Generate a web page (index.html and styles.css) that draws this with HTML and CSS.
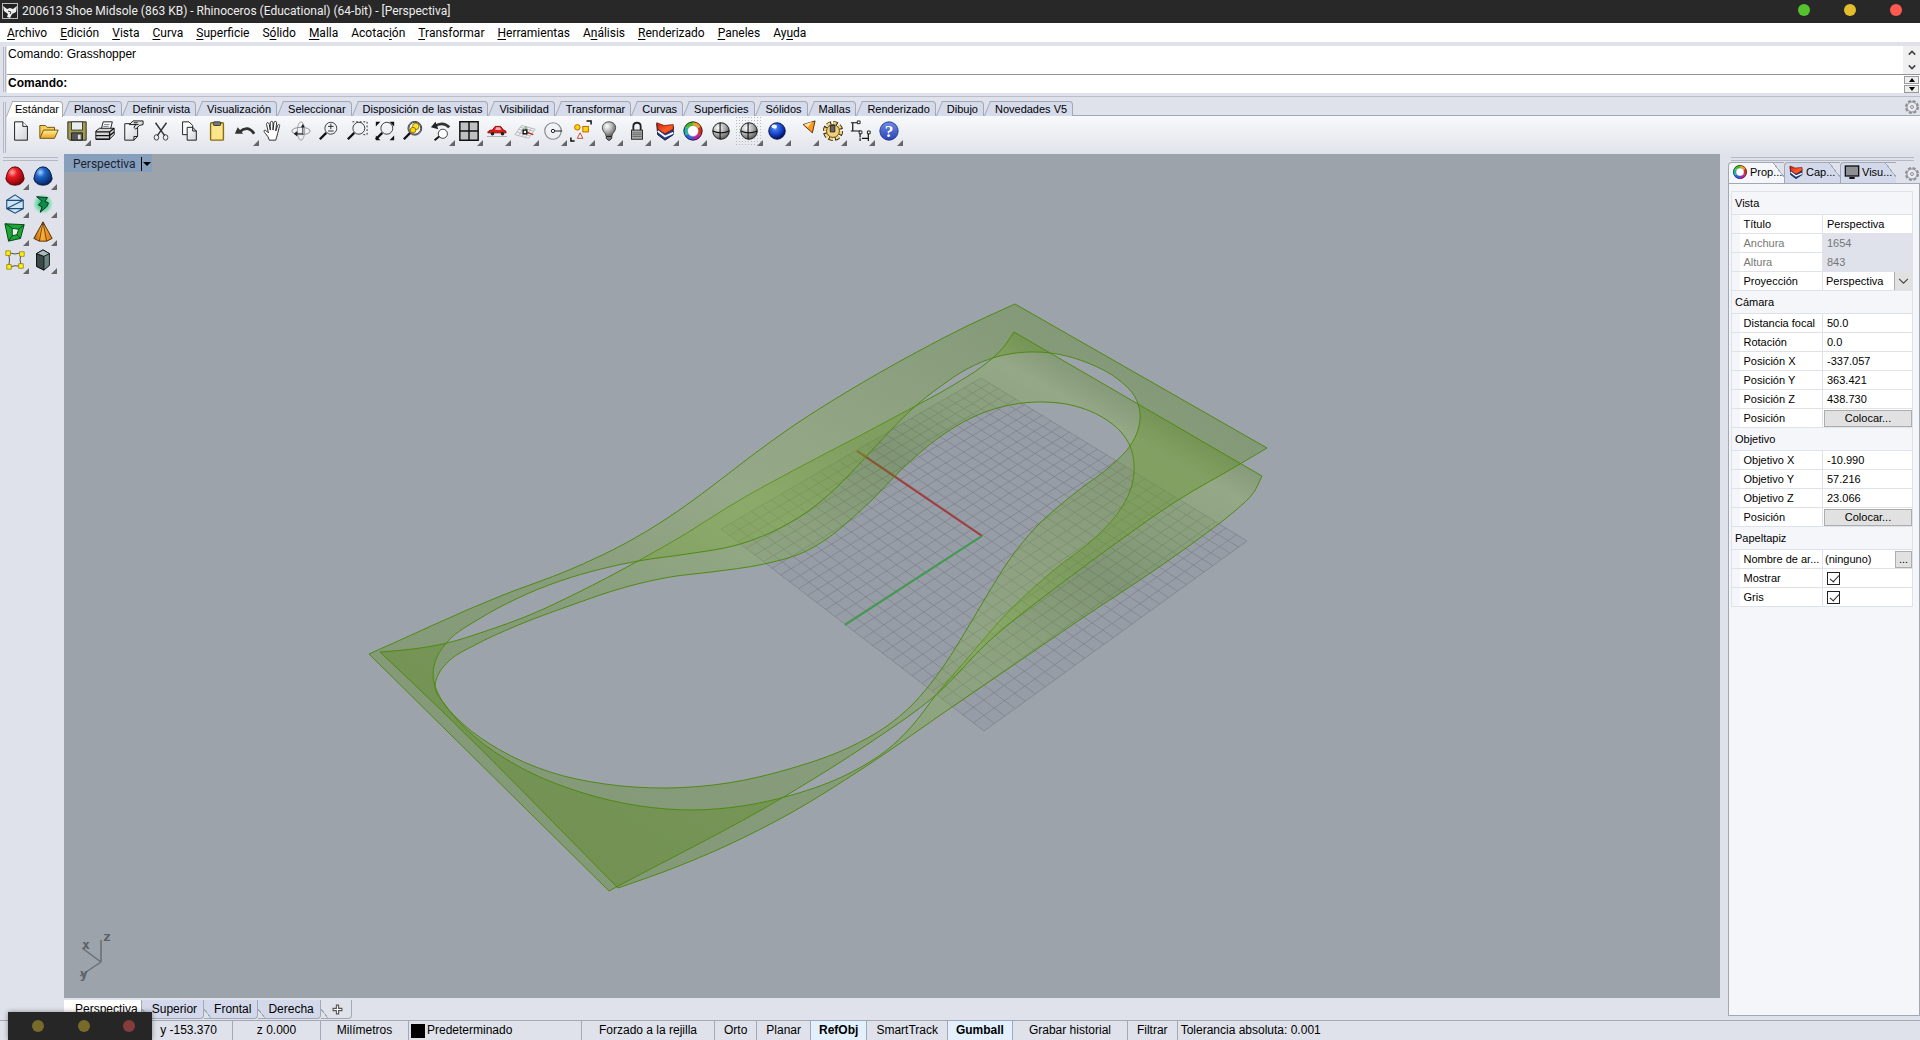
FILE: index.html
```html
<!DOCTYPE html>
<html lang="es">
<head>
<meta charset="utf-8">
<title>200613 Shoe Midsole (863 KB) - Rhinoceros (Educational) (64-bit) - [Perspectiva]</title>
<link rel="stylesheet" href="styles.css">
</head>
<body>
<svg class="defs" aria-hidden="true">
  <defs>
    <linearGradient id="gPage" x1="0" y1="0" x2="1" y2="1"><stop offset="0" stop-color="#fff"/><stop offset="1" stop-color="#cfd2d8"/></linearGradient>
    <linearGradient id="gFolder" x1="0" y1="0" x2="0" y2="1"><stop offset="0" stop-color="#fff0a0"/><stop offset="1" stop-color="#e8a21c"/></linearGradient>
    <radialGradient id="gRed" cx=".35" cy=".3" r=".75"><stop offset="0" stop-color="#ffb0a8"/><stop offset=".35" stop-color="#ee1c25"/><stop offset="1" stop-color="#7d0008"/></radialGradient>
    <radialGradient id="gBlue" cx=".35" cy=".3" r=".75"><stop offset="0" stop-color="#a8d0ff"/><stop offset=".35" stop-color="#1c66c8"/><stop offset="1" stop-color="#06205c"/></radialGradient>
    <radialGradient id="gBall" cx=".38" cy=".3" r=".7"><stop offset="0" stop-color="#e8f2ff"/><stop offset=".2" stop-color="#3a78f0"/><stop offset=".75" stop-color="#0c2fae"/><stop offset="1" stop-color="#03103f"/></radialGradient>
    <radialGradient id="gGray" cx=".35" cy=".3" r=".75"><stop offset="0" stop-color="#fff"/><stop offset=".5" stop-color="#b4b4b4"/><stop offset="1" stop-color="#555"/></radialGradient>
    <radialGradient id="gGlow"><stop offset=".3" stop-color="#28d27a"/><stop offset="1" stop-color="#28d27a" stop-opacity="0"/></radialGradient>
    <linearGradient id="gHelp" x1="0" y1="0" x2="0" y2="1"><stop offset="0" stop-color="#6f8be6"/><stop offset="1" stop-color="#2a43b4"/></linearGradient>
    <linearGradient id="gCone" x1="0" y1="0" x2="1" y2="0"><stop offset="0" stop-color="#b8600a"/><stop offset=".45" stop-color="#ffb03a"/><stop offset="1" stop-color="#d67a10"/></linearGradient>
    <linearGradient id="gLayer" x1="0" y1="0" x2="1" y2="1"><stop offset="0" stop-color="#c81c08"/><stop offset=".6" stop-color="#ff5a26"/><stop offset="1" stop-color="#e83010"/></linearGradient>
    <symbol id="layers" viewBox="0 0 24 24"><path d="M3 4l8 6 10-3v9l-9 6-8-6z" fill="#1d3f98" stroke="#111"/><path d="M4 12l8 6 9-4" fill="none" stroke="#fff" stroke-width="2"/><path d="M3 3l8 3 10-1v5l-9 5-8-5z" fill="url(#gLayer)" stroke="#6a1406" stroke-width=".8"/></symbol>
    <symbol id="ring" viewBox="0 0 24 24"><g fill="none" stroke-width="5"><path d="M12 4.500A7.500 7.500 0 0 1 18.500 8.200" stroke="#f0a020"/><path d="M18.500 8.200A7.500 7.500 0 0 1 18.500 15.800" stroke="#e02818"/><path d="M18.500 15.800A7.500 7.500 0 0 1 12 19.500" stroke="#c018b0"/><path d="M12 19.500A7.500 7.500 0 0 1 5.500 15.800" stroke="#2860e8"/><path d="M5.500 15.800A7.500 7.500 0 0 1 5.500 8.200" stroke="#18b8b0"/><path d="M5.500 8.200A7.500 7.500 0 0 1 12 4.500" stroke="#40c020"/></g><circle cx="12" cy="12" r="10" fill="none" stroke="#222"/><circle cx="12" cy="12" r="6" fill="#fff" stroke="#777" stroke-width=".6"/></symbol>
    <symbol id="sphere" viewBox="0 0 24 24"><circle cx="12" cy="12" r="9" fill="url(#gGray)" stroke="#111"/><path d="M11 3v18M3 12q9 4 18 0" fill="none" stroke="#111" stroke-width="1.200"/></symbol>
    <symbol id="lens" viewBox="0 0 24 24"><path d="M9 14l-7 7" stroke="#111" stroke-width="2.500"/><circle cx="14" cy="9" r="6.500" fill="#f1f2f5" fill-opacity=".6" stroke="#333"/></symbol>
    <symbol id="gear" viewBox="0 0 16 16"><circle cx="8" cy="8" r="6" fill="none" stroke="#8d8f94" stroke-width="2" stroke-dasharray="3 1.700"/><circle cx="8" cy="8" r="5" fill="#e9ebf0" stroke="#8d8f94"/><circle cx="8" cy="8" r="1.500" fill="none" stroke="#8d8f94"/></symbol>
  </defs>
</svg>

<header class="titlebar">
  <svg class="app-icon" viewBox="0 0 16 16"><rect width="16" height="16" fill="#bbb"/><rect x="1" y="1" width="14" height="14" fill="#222"/><path d="M1 3l4 3 3-1 3 1 4-3-1 6-4 2-2 4-3-1 1-3-4-3z" fill="#eee"/><path d="M6 8l3 1-1 2" stroke="#333" fill="none"/></svg>
  <h1>200613 Shoe Midsole (863 KB) - Rhinoceros (Educational) (64-bit) - [Perspectiva]</h1>
  <div class="window-buttons">
    <button class="dot green" aria-label="Minimizar"></button>
    <button class="dot yellow" aria-label="Maximizar"></button>
    <button class="dot red" aria-label="Cerrar"></button>
  </div>
</header>

<nav class="menubar">
  <button><u>A</u>rchivo</button><button><u>E</u>dición</button><button><u>V</u>ista</button><button><u>C</u>urva</button><button><u>S</u>uperficie</button><button>S<u>ó</u>lido</button><button><u>M</u>alla</button><button>Acotac<u>i</u>ón</button><button><u>T</u>ransformar</button><button><u>H</u>erramientas</button><button>A<u>n</u>álisis</button><button><u>R</u>enderizado</button><button><u>P</u>aneles</button><button>Ay<u>u</u>da</button>
</nav>

<section class="command">
  <div class="grip"></div>
  <div class="command-box">
    <div class="history">
      <p>Comando: Grasshopper</p>
      <div class="scroll"><button aria-label="Subir"><svg viewBox="0 0 10 6"><path d="M1 5l4-4 4 4"/></svg></button><button aria-label="Bajar"><svg viewBox="0 0 10 6"><path d="M1 1l4 4 4-4"/></svg></button></div>
    </div>
    <div class="prompt">
      <label for="cmd">Comando:</label><input id="cmd" type="text">
      <div class="spin"><button aria-label="Anterior"><svg viewBox="0 0 6 4"><path d="M0 4l3-4 3 4z"/></svg></button><button aria-label="Siguiente"><svg viewBox="0 0 6 4"><path d="M0 0l3 4 3-4z"/></svg></button></div>
    </div>
  </div>
</section>

<section class="toolband">
  <div class="grip"></div>
  <div class="toolband-main">
    <div class="tabs">
      <button class="active">Estándar</button><button>PlanosC</button><button>Definir vista</button><button>Visualización</button><button>Seleccionar</button><button>Disposición de las vistas</button><button>Visibilidad</button><button>Transformar</button><button>Curvas</button><button>Superficies</button><button>Sólidos</button><button>Mallas</button><button>Renderizado</button><button>Dibujo</button><button>Novedades V5</button>
      <svg class="gear" viewBox="0 0 16 16"><use href="#gear"/></svg>
    </div>
    <div class="tools">
      <button aria-label="Nuevo"><svg viewBox="0 0 24 24"><path d="M5 2h9l5 5v15H5z" fill="url(#gPage)" stroke="#111"/><path d="M14 2v5h5" fill="#fff" stroke="#111"/></svg></button>
      <button aria-label="Abrir"><svg viewBox="0 0 24 24"><path d="M2 19V6h6l2 2h8v3" fill="#f7cf52" stroke="#6a4a08"/><path d="M2 20l4-9h16l-4 9z" fill="url(#gFolder)" stroke="#6a4a08"/></svg></button>
      <button class="more" aria-label="Guardar"><svg viewBox="0 0 24 24"><path d="M2 2h20v20H4l-2-2z" fill="#a39c4e" stroke="#222"/><path d="M6 2h12v9H6z" fill="#e9edf0" stroke="#333"/><path d="M6 14h12v8H6z" fill="#555" stroke="#222"/><path d="M13 16h3v5h-3z" fill="#ddd"/></svg></button>
      <button aria-label="Imprimir"><svg viewBox="0 0 24 24"><path d="M8 10l2-8h10l-2 8z" fill="#fff" stroke="#111"/><path d="M11 5h6M10 7h6" stroke="#777"/><path d="M2 12l4-3h16v7l-5 5H2z" fill="#d6d6d6" stroke="#111"/><path d="M2 13h15l5-4M2 17h15l5-4M17 13v8M2 21h15" fill="none" stroke="#111" stroke-width="1.500"/></svg></button>
      <button aria-label="Propiedades"><svg viewBox="0 0 24 24"><path d="M3 4h14v14l-4 4H3z" fill="url(#gPage)" stroke="#111"/><path d="M13 22v-4h4" fill="none" stroke="#111"/><path d="M8 5l4-4h11v4l-4 1-4 4-2-2 2-3z" fill="#ddd" stroke="#111"/><path d="M13 3h4M14 5h4" stroke="#111"/></svg></button>
      <button aria-label="Cortar"><svg viewBox="0 0 24 24"><path d="M6 3l10 14M18 3L8 17" stroke="#333" stroke-width="1.600"/><ellipse cx="7" cy="19" rx="2.500" ry="3" fill="none" stroke="#333"/><ellipse cx="17" cy="19" rx="2.500" ry="3" fill="none" stroke="#333"/></svg></button>
      <button aria-label="Copiar"><svg viewBox="0 0 24 24"><path d="M5 2h7l4 4v10H5z" fill="#fff" stroke="#111"/><path d="M10 8h6l4 4v10H10z" fill="url(#gPage)" stroke="#111"/><path d="M16 8v4h4" fill="none" stroke="#111"/></svg></button>
      <button aria-label="Pegar"><svg viewBox="0 0 24 24"><rect x="5" y="3" width="14" height="19" rx="1" fill="#fbe68a" stroke="#8a6a12" stroke-width="1.500"/><rect x="8" y="2" width="8" height="4" rx="1" fill="#777" stroke="#333"/></svg></button>
      <button class="more" aria-label="Deshacer"><svg viewBox="0 0 24 24"><path d="M6 13Q15 5 22 15" fill="none" stroke="#333" stroke-width="3"/><path d="M1 15l3-7 6 7z" fill="#333"/></svg></button>
      <button aria-label="Encuadre"><svg viewBox="0 0 24 24"><path d="M8 22q-1-4-4-7c-3-3-2-5 1-3l2 2-2-9c0-3 2-3 3 0l1 6V3c0-2 3-2 3 0v8l1-8c0-2 3-2 3 0l-1 9 2-6c1-2 3-1 2 1l-2 8q-1 4-2 7z" fill="#fff" stroke="#222"/></svg></button>
      <button aria-label="Rotar vista"><svg viewBox="0 0 24 24"><ellipse cx="12" cy="12" rx="10" ry="4" fill="none" stroke="#888"/><ellipse cx="12" cy="12" rx="4" ry="10" fill="none" stroke="#999"/><path d="M14 6v10M6 15h8" stroke="#222"/><path d="M12 8l2-4 2 4zM8 12v6l-4-3z" fill="#222"/></svg></button>
      <button aria-label="Zoom dinámico"><svg viewBox="0 0 24 24"><use href="#lens"/><path d="M11 7h6M14 4v6M11 12h6" stroke="#222"/></svg></button>
      <button aria-label="Zoom ventana"><svg viewBox="0 0 24 24"><use href="#lens"/><path d="M7 2h16v14h-5" fill="none" stroke="#222" stroke-dasharray="2 2"/></svg></button>
      <button aria-label="Zoom extensión"><svg viewBox="0 0 24 24"><use href="#lens"/><path d="M2 2h5L2 7zM22 2v5l-5-5zM22 22h-5l5-5zM2 22v-5l5 5z" fill="#111"/></svg></button>
      <button aria-label="Zoom seleccionado"><svg viewBox="0 0 24 24"><use href="#lens"/><circle cx="15" cy="7" r="3.500" fill="#ffe22e" stroke="#8a7400"/><circle cx="12" cy="11" r="3" fill="#ffd800" stroke="#8a7400"/><circle cx="14" cy="9" r="7.500" fill="none" stroke="#333"/></svg></button>
      <button class="more" aria-label="Vista anterior"><svg viewBox="0 0 24 24"><path d="M5 7Q14 1 21 8" fill="none" stroke="#333" stroke-width="3"/><path d="M1 8l5-6 3 8z" fill="#222"/><circle cx="14" cy="15" r="5" fill="#fff" stroke="#333"/><path d="M10 18l-5 4" stroke="#111" stroke-width="2"/></svg></button>
      <button class="more" aria-label="Cuatro vistas"><svg viewBox="0 0 24 24"><path d="M2 2h20v20H2z" fill="#bfc0c2" stroke="#111" stroke-width="1.600"/><path d="M12 2v20M2 12h20" stroke="#111" stroke-width="1.600"/></svg></button>
      <button class="more" aria-label="Vista derecha"><svg viewBox="0 0 24 24"><path d="M2 14q0-3 5-3l3-4h6l3 4q3 0 3 3z" fill="#e01818" stroke="#8a0808"/><path d="M11 8h4l2 3h-7z" fill="#f6b0b0"/><circle cx="7" cy="15" r="2" fill="#222"/><circle cx="18" cy="15" r="2" fill="#222"/><path d="M1 18h22" stroke="#aaa"/></svg></button>
      <button class="more" aria-label="Plano de construcción"><svg viewBox="0 0 24 24"><path d="M8 6l15 4-7 10L1 16zM12 7l-7 10M15 8L9 18M19 9l-7 10M5 10l14 5M3 13l14 4M7 8l14 4" fill="none" stroke="#aaa" stroke-width=".8"/><path d="M13 13l8 3" stroke="#c22" stroke-width="1.600"/><path d="M13 13V7" stroke="#2a2"/><rect x="10" y="11" width="4" height="4" fill="#fff" stroke="#111" stroke-width="1.500"/></svg></button>
      <button class="more" aria-label="Referencia a objetos"><svg viewBox="0 0 24 24"><circle cx="12" cy="12" r="9" fill="none" stroke="#888" stroke-width="1.300"/><circle cx="12" cy="12" r="1.800" fill="#fff" stroke="#111"/><path d="M14 12h8" stroke="#111"/></svg></button>
      <button class="more" aria-label="Seleccionar"><svg viewBox="0 0 24 24"><path d="M18 1h5v4M1 19v4h4" fill="none" stroke="#111" stroke-width="1.600"/><circle cx="8" cy="8" r="3" fill="#ffd800" stroke="#c05a00"/><rect x="14" y="7" width="6" height="6" fill="#ffd800" stroke="#c05a00"/><path d="M11 14l3 6H8z" fill="#fff" stroke="#c23a1a"/></svg></button>
      <button class="more" aria-label="Ocultar"><svg viewBox="0 0 24 24"><path d="M8 15c-6-6-3-13 4-13s10 7 4 13l-1 3H9z" fill="url(#gGray)" stroke="#444"/><path d="M9 18h6v2l-2 2h-2l-2-2z" fill="#777" stroke="#222"/></svg></button>
      <button class="more" aria-label="Bloquear"><svg viewBox="0 0 24 24"><path d="M8 11V7q0-4 4-4t4 4v4" fill="none" stroke="#222" stroke-width="2"/><rect x="6" y="11" width="12" height="10" fill="#aaa" stroke="#222"/><path d="M7 14h10M7 16h10M7 18h10" stroke="#666"/></svg></button>
      <button class="more" aria-label="Capas"><svg viewBox="0 0 24 24"><use href="#layers"/></svg></button>
      <button class="more" aria-label="Propiedades de objeto"><svg viewBox="0 0 24 24"><use href="#ring"/></svg></button>
      <button aria-label="Sombreado"><svg viewBox="0 0 24 24"><use href="#sphere"/></svg></button>
      <button class="more pressed" aria-label="Modo sombreado"><svg viewBox="0 0 24 24"><use href="#sphere"/></svg></button>
      <button class="more" aria-label="Renderizar"><svg viewBox="0 0 24 24"><circle cx="12" cy="12" r="9" fill="url(#gBall)" stroke="#041040"/><ellipse cx="9" cy="7" rx="3" ry="2" fill="#fff" opacity=".9"/></svg></button>
      <button class="more" aria-label="Luz"><svg viewBox="0 0 24 24"><path d="M10 5l13-4-3 13z" fill="#ff9a1c" stroke="#4a2a08"/><path d="M11 5l9-3-5 6z" fill="#ffe3a8"/></svg></button>
      <button class="more" aria-label="Opciones"><svg viewBox="0 0 24 24"><circle cx="12" cy="12" r="8.500" fill="none" stroke="#3a2a08" stroke-width="5" stroke-dasharray="4.600 2.075"/><circle cx="12" cy="12" r="8" fill="none" stroke="#f6d47a" stroke-width="4" stroke-dasharray="3.300 2.980"/><circle cx="12" cy="12" r="7" fill="#f3d07a" stroke="#5a4212"/><path d="M9 6h5v7H9z" fill="#666" stroke="#222"/></svg></button>
      <button class="more" aria-label="Acotar"><svg viewBox="0 0 24 24"><path d="M3 3v9M1 3h8M1 12h10v7M11 20v3M20 13v10M13 20h7" fill="none" stroke="#111" stroke-width="1.300"/><path d="M8 1h3v3H8zM10 12h3v3h-3zM19 12h3v3h-3z" fill="#fff" stroke="#111"/></svg></button>
      <button class="more" aria-label="Ayuda"><svg viewBox="0 0 24 24"><circle cx="12" cy="12" r="10" fill="url(#gHelp)" stroke="#24378e"/><text x="12" y="19" class="help-mark">?</text></svg></button>
    </div>
  </div>
</section>

<main class="work">
  <aside class="dock">
    <div class="dock-grip"></div>
    <div class="dock-tools">
      <button class="more" aria-label="Esfera roja"><svg viewBox="0 0 24 24"><path d="M2 15Q4 2 12 2t10 13q-2 7-10 7T2 15z" fill="url(#gRed)" stroke="#5a0006"/></svg></button>
      <button class="more" aria-label="Esfera azul"><svg viewBox="0 0 24 24"><path d="M2 15Q4 2 12 2t10 13q-2 7-10 7T2 15z" fill="url(#gBlue)" stroke="#04163e"/></svg></button>
      <button class="more" aria-label="Malla"><svg viewBox="0 0 24 24"><path d="M12 2l9 6v9l-9 5-9-5V8z" fill="#cfe4f5" stroke="#1d4d78" stroke-width="1.200"/><path d="M3 8h18M3 17h18M3 17L21 8" fill="none" stroke="#1d4d78" stroke-width="1.200"/></svg></button>
      <button class="more" aria-label="Explotar"><svg viewBox="0 0 24 24"><circle cx="12" cy="12" r="11" fill="url(#gGlow)"/><path d="M5 4l12 1-3 4 4 2-2 4-7 6 2-6-4-2 4-4z" fill="#118a4a" stroke="#062a18"/></svg></button>
      <button class="more" aria-label="Superficie"><svg viewBox="0 0 24 24"><path d="M1 3l21 1-4 15-13 3z" fill="#19a838" stroke="#063c12"/><path d="M9 8l7 1-2 6-5 1z" fill="#e8f4ea" stroke="#063c12"/><path d="M2 3l7 5M22 4l-6 5M18 19l-4-4M5 22l4-6" stroke="#063c12"/></svg></button>
      <button class="more" aria-label="Pirámide"><svg viewBox="0 0 24 24"><path d="M12 1l10 18-6 3H8l-6-3z" fill="url(#gCone)" stroke="#4a2804"/><path d="M12 1L8 22M12 1l4 21" stroke="#4a2804" stroke-width=".8"/></svg></button>
      <button class="more" aria-label="Puntos de control"><svg viewBox="0 0 24 24"><path d="M5 4q7 3 14 0-3 8 0 15-7-2-14 1 2-8 0-16z" fill="none" stroke="#444"/><path d="M2 2h5v5H2zM17 3h5v5h-5zM16 16h5v5h-5zM3 17h5v5H3z" fill="#ffee10" stroke="#8a7a00" stroke-width=".8"/></svg></button>
      <button class="more" aria-label="Sólido"><svg viewBox="0 0 24 24"><path d="M5 5l7-4 7 4v13l-6 5-8-4z" fill="#6b8080" stroke="#111"/><path d="M5 5l8 3v15l-8-4z" fill="#3a4a4a" stroke="#111"/><path d="M5 5l7-4 7 4-6 3z" fill="#a9bbbb" stroke="#111"/></svg></button>
    </div>
  </aside>

  <section class="center">
    <div class="viewport">
      <svg class="scene" viewBox="64 154 1656 844" preserveAspectRatio="xMidYMid meet">
        <defs>
          <linearGradient id="sheetTop" gradientUnits="userSpaceOnUse" x1="-224" y1="390" x2="119" y2="-208">
            <stop offset="0" stop-color="#4a8201"/><stop offset=".3" stop-color="#558c0c"/><stop offset=".56" stop-color="#82b435"/><stop offset=".7" stop-color="#78ac2c"/><stop offset="1" stop-color="#4a8201"/>
          </linearGradient>
          <linearGradient id="sheetLow" gradientUnits="userSpaceOnUse" x1="-224" y1="390" x2="119" y2="-208">
            <stop offset="0" stop-color="#4a8201"/><stop offset=".25" stop-color="#508806"/><stop offset=".5" stop-color="#78b028"/><stop offset=".58" stop-color="#70a81c"/><stop offset=".72" stop-color="#4a8201"/><stop offset=".82" stop-color="#66a01c"/><stop offset=".92" stop-color="#82b435"/><stop offset=".97" stop-color="#4a8201"/>
          </linearGradient>
        </defs>
        <path id="gridArea" class="grid-area"/>
        <path id="gridLines" class="grid-lines"/>
        <path class="axis-x" d="M982 536L857 451"/>
        <path class="axis-y" d="M982 536L845 625"/>
        <path id="low" class="sheet" fill="url(#sheetLow)"/>
        <path id="top" class="sheet" fill="url(#sheetTop)"/>
        <g class="gizmo"><path d="M101 962V940M101 962L82 948M101 962L80 976"/><text x="103" y="941">z</text><text x="82" y="949">x</text><text x="80" y="978">y</text></g>
      </svg>
      <button class="view-label"><span>Perspectiva</span><i></i></button>
    </div>
    <div class="view-tabs">
      <button class="active">Perspectiva</button><button>Superior</button><button>Frontal</button><button>Derecha</button><button class="add" aria-label="Nueva vista"><svg viewBox="0 0 10 10"><path d="M4 1h2v3h3v2H6v3H4V6H1V4h3z"/></svg></button>
    </div>
  </section>

  <aside class="panel">
    <div class="dock-grip"></div>
    <div class="panel-tabs">
      <button class="active"><svg viewBox="0 0 24 24"><use href="#ring"/></svg>Prop...</button>
      <button><svg viewBox="0 0 24 24"><use href="#layers"/></svg>Cap...</button>
      <button><svg viewBox="0 0 24 24"><rect x="2" y="3" width="20" height="15" fill="#8c9094" stroke="#111" stroke-width="2"/><path d="M8 21h8" stroke="#111" stroke-width="3"/></svg>Visu...</button>
      <svg class="gear" viewBox="0 0 16 16"><use href="#gear"/></svg>
    </div>
    <div class="panel-body">
      <table>
        <colgroup><col class="c-indent"><col class="c-name"><col></colgroup>
        <tbody>
        <tr class="head"><th colspan="3">Vista</th></tr>
        <tr><td></td><th>Título</th><td>Perspectiva</td></tr>
        <tr class="off"><td></td><th>Anchura</th><td>1654</td></tr>
        <tr class="off"><td></td><th>Altura</th><td>843</td></tr>
        <tr><td></td><th><label for="proj">Proyección</label></th><td class="ctl"><div class="pick"><select id="proj"><option>Perspectiva</option></select><svg viewBox="0 0 10 6"><path d="M1 1l4 4 4-4"/></svg></div></td></tr>
        <tr class="head"><th colspan="3">Cámara</th></tr>
        <tr><td></td><th>Distancia focal</th><td>50.0</td></tr>
        <tr><td></td><th>Rotación</th><td>0.0</td></tr>
        <tr><td></td><th>Posición X</th><td>-337.057</td></tr>
        <tr><td></td><th>Posición Y</th><td>363.421</td></tr>
        <tr><td></td><th>Posición Z</th><td>438.730</td></tr>
        <tr><td></td><th>Posición</th><td class="ctl"><button class="place">Colocar...</button></td></tr>
        <tr class="head"><th colspan="3">Objetivo</th></tr>
        <tr><td></td><th>Objetivo X</th><td>-10.990</td></tr>
        <tr><td></td><th>Objetivo Y</th><td>57.216</td></tr>
        <tr><td></td><th>Objetivo Z</th><td>23.066</td></tr>
        <tr><td></td><th>Posición</th><td class="ctl"><button class="place">Colocar...</button></td></tr>
        <tr class="head"><th colspan="3">Papeltapiz</th></tr>
        <tr><td></td><th>Nombre de ar...</th><td class="ctl"><div class="file"><span>(ninguno)</span><button>...</button></div></td></tr>
        <tr><td></td><th><label for="show">Mostrar</label></th><td class="check"><input id="show" type="checkbox" checked></td></tr>
        <tr><td></td><th><label for="grey">Gris</label></th><td class="check"><input id="grey" type="checkbox" checked></td></tr>
        </tbody>
      </table>
    </div>
  </aside>
</main>

<footer class="status">
  <span class="w-plane"></span><span class="w-coord"></span><span class="w-coord">y -153.370</span><span class="w-coord">z 0.000</span><span class="w-coord">Milímetros</span>
  <span class="layer"><i></i>Predeterminado</span>
  <button class="w-snap">Forzado a la rejilla</button><button>Orto</button><button>Planar</button><button class="on">RefObj</button><button>SmartTrack</button><button class="on">Gumball</button><button class="w-hist">Grabar historial</button><button>Filtrar</button>
  <span class="tol">Tolerancia absoluta: 0.001</span>
</footer>
<div class="floating"><i></i><i></i><i class="close"></i></div>
<script src="scene.js"></script>
</body>
</html>
```
FILE: styles.css
```css
* { box-sizing: border-box; }
body { margin: 0; height: 100vh; display: flex; flex-direction: column; overflow: hidden; background: #dfe2ea; color: #000; font: 11px/14px "Liberation Sans", Arial, sans-serif; }
button { border: 0; background: none; padding: 0; margin: 0; font: inherit; color: inherit; white-space: nowrap; }
p, h1 { margin: 0; }
svg { display: block; }
.defs { position: absolute; width: 0; height: 0; }

.titlebar { display: flex; align-items: center; gap: 4px; height: 23px; padding: 0 18px 1px 2px; background: #282828; color: #eee; flex: none; }
.titlebar h1 { font: 12px/16px Roboto, "Noto Sans", sans-serif; }
.app-icon { width: 16px; height: 16px; }
.window-buttons { margin-left: auto; padding-bottom: 2px; display: flex; gap: 34px; }
.dot { width: 12px; height: 12px; border-radius: 50%; }
.green { background: #55c22e; }
.yellow { background: #e3be2c; }
.red { background: #ff5a50; }

.menubar { display: flex; gap: 13px; height: 19px; padding: 1px 7px 0; background: #fff; font: 12px/18px Roboto, "Noto Sans", sans-serif; flex: none; }
.menubar u { text-underline-offset: 2px; }

.grip { width: 3px; margin: 1px 1px 1px 3px; border: 1px solid #b4b8c4; border-width: 0 1px; flex: none; }
.command { display: flex; margin-top: 4px; padding-bottom: 3px; border-bottom: 1px solid #b9bdc9; flex: none; }
.command-box { flex: 1; background: #fff; font-size: 12px; }
.history { display: flex; height: 29px; border-bottom: 1px solid #8f929b; padding-left: 1px; justify-content: space-between; }
.history p { padding-top: 1px; }
.scroll { width: 17px; background: #f0f0f0; display: flex; flex-direction: column; justify-content: space-around; align-items: center; }
.scroll svg { width: 8px; height: 6px; fill: none; stroke: #444; stroke-width: 2; }
.scroll button { display: block; height: 14px; }
.prompt { display: flex; height: 18px; padding-left: 1px; font-weight: bold; line-height: 16px; }
.prompt input { flex: 1; border: 0; outline: 0; height: 16px; background: none; font: inherit; }
.spin { width: 15px; margin-right: 1px; display: grid; gap: 1px; align-content: center; }
.spin button { height: 8px; border: 1px solid #999; background: #eee; display: grid; place-items: center; }
.spin svg { width: 6px; height: 4px; }

.toolband { display: flex; margin-top: 4px; flex: none; }
.toolband-main { flex: 1; }
.tabs { display: flex; height: 15px; border-bottom: 1px solid #a3a8b5; }
.tabs button { position: relative; isolation: isolate; height: 15px; padding: 0 6px 0 11px; line-height: 16px; }
.tabs button::before { content: ""; position: absolute; z-index: -1; left: 3px; top: 0; width: 14px; height: 14px; background: #d5dbea; border: 1px solid #a3a8b5; border-width: 1px 0 0 1px; transform: skewX(-22deg); }
.tabs button::after { content: ""; position: absolute; z-index: -1; left: 12px; right: 0; top: 0; height: 14px; background: #d5dbea; border: 1px solid #a3a8b5; border-width: 1px 1px 0 0; border-radius: 0 4px 0 0; }
.tabs button.active { padding: 0 4px 0 8px; }
.tabs .active::before { left: 2px; height: 15px; background: #fff; }
.tabs .active::after { height: 15px; background: #fff; }
.gear { width: 16px; height: 16px; margin-left: auto; }
.tabs .gear { margin-top: -2px; }
.tools { display: flex; height: 38px; background: linear-gradient(#f8f9fb, #e0e3ea); }
.tools button, .dock-tools button { width: 28px; height: 30px; padding: 3px; position: relative; }
.tools svg { width: 22px; height: 24px; }
.more::after { content: ""; position: absolute; right: 0; bottom: 0; border: 3px solid; border-color: transparent #666 #666 transparent; }
.pressed { background: radial-gradient(circle, #b6b9c1 1px, transparent 1px) 0 0 / 3px 3px; }
.help-mark { font: bold 19px "Liberation Serif", serif; fill: #fff; text-anchor: middle; }

.work { flex: 1; display: flex; min-height: 0; }
.dock { width: 64px; flex: none; }
.dock-grip { height: 4px; margin: 3px 6px 0 3px; border: 1px solid #b4b8c4; border-width: 1px 0; }
.dock-tools { display: grid; grid-template-columns: 28px 28px; grid-auto-rows: 28px; padding: 1px; }
.dock-tools button { height: 28px; }
.dock-tools svg { width: 22px; height: 22px; }
.center { flex: 1; min-width: 0; display: flex; flex-direction: column; }
.viewport { flex: 1; min-height: 0; position: relative; background: #9da3ab; overflow: hidden; }
.scene { width: 100%; height: 100%; }
.view-label { position: absolute; left: 0; top: 0; height: 18px; padding: 1px 1px 0 9px; display: flex; align-items: center; gap: 5px; background: #869fbd; font: 12px/18px Roboto, "Noto Sans", sans-serif; color: #1c2430; }
.view-label i { height: 14px; width: 10px; border-left: 1px solid #000; display: grid; place-items: center end; }
.view-label i::after { content: ""; border: 4px solid transparent; border-top: 4px solid #000; border-bottom: 0; }
.grid-area { fill: #85899a; fill-opacity: .22; }
.grid-lines { fill: none; stroke: #7c8087; stroke-opacity: .7; }
.axis-x, .axis-y { stroke-width: 2; fill: none; }
.axis-x { stroke: #a23c3c; }
.axis-y { stroke: #3c9c48; }
.sheet { fill-rule: evenodd; fill-opacity: .3; stroke: #4f8a12; stroke-width: 1; }
.gizmo path { fill: none; stroke: #6a6f76; stroke-width: 1.500; }
.gizmo text { font: bold 13px "DejaVu Sans Mono", monospace; fill: #5c6067; }
.view-tabs { display: flex; height: 22px; padding: 2px 0; }
.view-tabs button { height: 19px; padding: 0 6px 0 10px; background: linear-gradient(52deg, #dfe2ea 5px, #a3a8b5 5px, #a3a8b5 6px, #d3d9ea 6px); border-right: 1px solid #a3a8b5; border-bottom: 1px solid #a3a8b5; border-radius: 0 0 4px 0; font-size: 12px; }
.view-tabs .active { background: #fff; padding: 0 3px 0 11px; }
.view-tabs .add { background: linear-gradient(52deg, #dfe2ea 5px, #a3a8b5 5px, #a3a8b5 6px, #dfe2ea 6px); padding: 0 8px 0 11px; }
.add svg { width: 11px; height: 11px; fill: #fff; stroke: #555; }

.panel { width: 192px; flex: none; margin-left: 8px; display: flex; flex-direction: column; padding-bottom: 4px; }
.panel-tabs { display: flex; height: 22px; padding-top: 1px; }
.panel-tabs button { display: flex; align-items: center; gap: 2px; height: 21px; width: 56px; padding: 0 0 2px 3px; border: 1px solid #a3a8b5; border-width: 1px 0 0 1px; border-radius: 4px 0 0 0; background: linear-gradient(232deg, #dfe2ea 8px, #a3a8b5 8px, #a3a8b5 9px, #d3d9ea 9px); }
.panel-tabs .active { background: linear-gradient(232deg, #dfe2ea 8px, #a3a8b5 8px, #a3a8b5 9px, #f5f6f9 9px); }
.panel-tabs button svg { width: 16px; height: 16px; flex: none; }
.panel-tabs .gear { margin: 4px 0 0 auto; }
.panel-body { flex: 1; border: 1px solid #a3a8b5; background: #f5f6f9; padding: 7px 6px 0 2px; }
table { width: 100%; border-collapse: collapse; table-layout: fixed; border: 1px solid #dfe2ea; }
.c-indent { width: 8px; }
.c-name { width: 83px; }
tr { height: 19px; }
th, td { padding: 0 0 0 4px; font-weight: normal; text-align: left; border: 1px solid #dfe2ea; border-left: 0; background: #fff; line-height: 14px; white-space: nowrap; }
.head { height: 23px; }
tr:not(.head) td:first-child, .head th { background: #f5f6f9; }
tr:not(.head) td:first-child { border-right: 0; padding: 0; }
.head th { padding-left: 3px; }
.off { color: #777; }
.off td:last-child { background: #dfe2ea; }
td.ctl { padding: 0 0 0 1px; }
.place { width: 100%; height: 17px; display: block; background: #e1e1e1; border: 1px solid #adadad; }
.pick { display: flex; align-items: center; position: relative; height: 18px; }
.pick select { appearance: none; border: 0; background: none; font: inherit; width: 100%; height: 18px; padding: 0 0 0 2px; margin: 0; }
.pick svg { position: absolute; right: 0; top: 0; width: 18px; height: 18px; padding: 4px 3px; background: #e1e1e1; border-left: 1px solid #adadad; fill: none; stroke: #444; }
.file { display: flex; justify-content: space-between; align-items: center; padding-left: 1px; }
.file button { width: 17px; height: 17px; background: #e1e1e1; border: 1px solid #adadad; line-height: 12px; }
.check input { appearance: none; display: block; width: 13px; height: 13px; margin: 0; border: 1px solid #222; background: #fff; }
.check input:checked::after { content: ""; display: block; width: 4px; height: 8px; margin: 0 0 0 4px; border: solid #222; border-width: 0 1px 1px 0; transform: rotate(42deg); }

.status { height: 20px; flex: none; display: flex; border-top: 1px solid #a3a8b5; font-size: 12px; line-height: 19px; }
.status > * { border-right: 1px solid #a3a8b5; padding: 0 9px; text-align: center; white-space: nowrap; }
.status .w-plane { width: 57px; }
.status .w-coord { width: 88px; }
.status .layer { width: 173px; padding: 0 2px; display: flex; align-items: center; gap: 2px; }
.layer i { width: 14px; height: 14px; background: #000; }
.status .w-snap { width: 133px; }
.status .w-hist { width: 115px; }
.status .on { background: #e2f1fd; font-weight: bold; padding: 0 8px; }
.status .tol { padding: 0 3px; border: 0; }
.floating { position: fixed; left: 8px; bottom: 0; width: 144px; height: 28px; background: #262626; display: flex; justify-content: space-between; align-items: center; padding: 0 17px 0 24px; box-shadow: 0 0 5px #0006; }
.floating i { width: 12px; height: 12px; border-radius: 50%; background: #776a2a; }
.floating .close { background: #843c3c; }
```
FILE: scene.js
```js
// Construction plane grid: perspective map from its four projected corners.
const corners = [[981, 378], [1247, 541], [984, 731], [721, 529]];
const cells = 28;

function projector([a, b, c, d]) {
  const sx = a[0] - b[0] + c[0] - d[0], sy = a[1] - b[1] + c[1] - d[1];
  const dx1 = b[0] - c[0], dx2 = d[0] - c[0], dy1 = b[1] - c[1], dy2 = d[1] - c[1];
  const det = dx1 * dy2 - dx2 * dy1;
  const g = (sx * dy2 - dx2 * sy) / det, h = (dx1 * sy - sx * dy1) / det;
  return (u, v) => {
    const w = g * u + h * v + 1;
    return [
      ((b[0] - a[0] + g * b[0]) * u + (d[0] - a[0] + h * d[0]) * v + a[0]) / w,
      ((b[1] - a[1] + g * b[1]) * u + (d[1] - a[1] + h * d[1]) * v + a[1]) / w
    ].map(n => n.toFixed(1));
  };
}

const project = projector(corners);
let lines = '';
for (let i = 0; i <= cells; i++) {
  const t = i / cells;
  lines += `M${project(t, 0)}L${project(t, 1)}M${project(0, t)}L${project(1, t)}`;
}
document.getElementById('gridLines').setAttribute('d', lines);
document.getElementById('gridArea').setAttribute('d', `M${corners.join('L')}Z`);

// Smooth curve through a list of points, with tangents weighted by chord length.
function curve(pts, closed) {
  const n = pts.length;
  const at = i => closed ? pts[(i + n) % n] : pts[i];
  const diff = (p, q) => {
    const v = [q[0] - p[0], q[1] - p[1]], len = Math.hypot(v[0], v[1]);
    return { len, unit: [v[0] / len, v[1] / len] };
  };
  const tangent = i => {
    if (!closed && i === 0) return diff(pts[0], pts[1]).unit;
    if (!closed && i === n - 1) return diff(pts[n - 2], pts[n - 1]).unit;
    const a = diff(at(i - 1), at(i)), b = diff(at(i), at(i + 1)), sum = a.len + b.len;
    return [0, 1].map(k => (a.unit[k] * b.len + b.unit[k] * a.len) / sum);
  };
  let d = '';
  for (let i = 0; i < (closed ? n : n - 1); i++) {
    const q = at(i), r = at(i + 1), third = diff(q, r).len / 3;
    const t = tangent(i), s = tangent(closed ? (i + 1) % n : i + 1);
    d += `C${q[0] + t[0] * third} ${q[1] + t[1] * third} ${r[0] - s[0] * third} ${r[1] - s[1] * third} ${r[0]} ${r[1]}`;
  }
  return d;
}

function sheet(id, edges, hole) {
  const outer = `M${edges[0][0]}` + edges.map((e, i) => (i ? `L${e[0]}` : '') + curve(e, false)).join('') + 'Z';
  document.getElementById(id).setAttribute('d', outer + `M${hole[0]}` + curve(hole, true) + 'Z');
}

sheet('top', [
  [[369, 654], [503, 595], [569, 570], [626, 543], [666, 519], [707, 490], [750, 457], [793, 426], [845, 393], [915, 353], [967, 326], [1015, 304]],
  [[1015, 304], [1267, 448]],
  [[1267, 448], [1240, 464], [1175, 502], [1119, 541], [1054, 589], [989, 641], [936, 695], [871, 742], [787, 795], [609, 891]]
], [
  [433, 675], [437, 657], [449, 640], [479, 619], [516, 599], [560, 581], [601, 569], [638, 561], [687, 554], [737, 545], [772, 532], [807, 512], [837, 487], [863, 460], [889, 432], [911, 410], [941, 386], [967, 369], [996, 357], [1028, 352], [1057, 354], [1088, 363], [1119, 380], [1135, 397], [1140, 413], [1138, 430], [1130, 446], [1114, 463], [1075, 493], [1036, 527], [1010, 559], [989, 592], [967, 629], [945, 664], [928, 687], [911, 706], [887, 726], [850, 747], [789, 769], [728, 783], [666, 788], [605, 784], [550, 772], [500, 750], [462, 723], [441, 699]
]);

sheet('low', [
  [[380, 652], [413, 649], [447, 643], [483, 632], [532, 614], [577, 593], [638, 561], [687, 533], [728, 507], [815, 459], [863, 434], [908, 410], [950, 387], [984, 365], [1002, 349], [1014, 332]],
  [[1014, 332], [1262, 476]],
  [[1262, 476], [1254, 492], [1236, 510], [1212, 529], [1162, 565], [1075, 623], [1002, 673], [952, 707], [871, 763], [789, 814], [728, 845], [666, 871], [618, 888]],
  [[618, 888], [440, 709], [380, 652]]
], [
  [435, 687], [438, 675], [450, 660], [475, 645], [516, 626], [569, 606], [626, 587], [670, 577], [711, 572], [764, 564], [802, 553], [828, 538], [850, 520], [875, 497], [898, 473], [923, 450], [950, 430], [980, 414], [1010, 405], [1044, 402], [1075, 406], [1102, 417], [1121, 432], [1130, 446], [1134, 464], [1132, 485], [1122, 507], [1097, 536], [1054, 570], [1010, 610], [967, 659], [936, 695], [911, 727], [887, 750], [850, 773], [792, 795], [742, 806], [691, 810], [640, 806], [580, 792], [516, 765], [475, 737], [446, 706]
]);
```
